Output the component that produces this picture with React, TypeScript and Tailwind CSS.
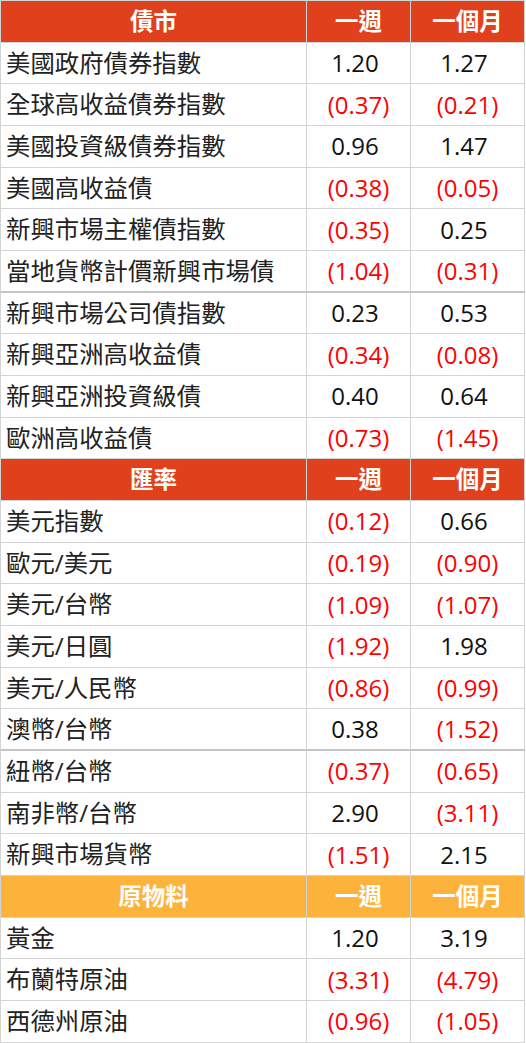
type Row = { name: string; week: string; month: string; thick?: boolean };
type Section = { title: string; color: string; rows: Row[] };

const sections: Section[] = [
  {
    title: '債市',
    color: 'bg-[#e0401c]',
    rows: [
      { name: '美國政府債券指數', week: '1.20', month: '1.27' },
      { name: '全球高收益債券指數', week: '(0.37)', month: '(0.21)' },
      { name: '美國投資級債券指數', week: '0.96', month: '1.47' },
      { name: '美國高收益債', week: '(0.38)', month: '(0.05)' },
      { name: '新興市場主權債指數', week: '(0.35)', month: '0.25' },
      { name: '當地貨幣計價新興市場債', week: '(1.04)', month: '(0.31)', thick: true },
      { name: '新興市場公司債指數', week: '0.23', month: '0.53' },
      { name: '新興亞洲高收益債', week: '(0.34)', month: '(0.08)' },
      { name: '新興亞洲投資級債', week: '0.40', month: '0.64' },
      { name: '歐洲高收益債', week: '(0.73)', month: '(1.45)' },
    ],
  },
  {
    title: '匯率',
    color: 'bg-[#e0401c]',
    rows: [
      { name: '美元指數', week: '(0.12)', month: '0.66' },
      { name: '歐元/美元', week: '(0.19)', month: '(0.90)' },
      { name: '美元/台幣', week: '(1.09)', month: '(1.07)' },
      { name: '美元/日圓', week: '(1.92)', month: '1.98' },
      { name: '美元/人民幣', week: '(0.86)', month: '(0.99)' },
      { name: '澳幣/台幣', week: '0.38', month: '(1.52)', thick: true },
      { name: '紐幣/台幣', week: '(0.37)', month: '(0.65)' },
      { name: '南非幣/台幣', week: '2.90', month: '(3.11)' },
      { name: '新興市場貨幣', week: '(1.51)', month: '2.15' },
    ],
  },
  {
    title: '原物料',
    color: 'bg-[#fdb33b]',
    rows: [
      { name: '黃金', week: '1.20', month: '3.19' },
      { name: '布蘭特原油', week: '(3.31)', month: '(4.79)' },
      { name: '西德州原油', week: '(0.96)', month: '(1.05)' },
    ],
  },
];

function Num({ value }: { value: string }) {
  const neg = value.startsWith('(');
  return (
    <span className={neg ? 'text-[#ff0000]' : 'text-[#111]'}>
      {value}
      {!neg && <span className="invisible">)</span>}
    </span>
  );
}

export default function App() {
  const font = { fontFamily: '"Open Sans", "Noto Sans CJK TC", sans-serif' };
  return (
    <div className="w-[526px] bg-white" style={font}>
      <div className="w-[525px] border-l border-t border-[#d4d4d4]">
        {sections.map((s) => (
          <div key={s.title}>
            {/* section header */}
            <div className={`grid grid-cols-[306px_104px_114px] h-[41.68px] border-b border-[#d4d4d4] ${s.color} text-white text-[23.5px] font-bold`}>
              <div className="flex items-center justify-center border-r border-[#d4d4d4]">{s.title}</div>
              <div className="flex items-center justify-center border-r border-[#d4d4d4]">一週</div>
              <div className="flex items-center justify-center border-r border-[#d4d4d4]">一個月</div>
            </div>
            {s.rows.map((r) => (
              <div
                key={r.name}
                className={`grid grid-cols-[306px_104px_114px] h-[41.68px] text-[24px] ${
                  r.thick ? 'border-b-2 border-[#c4c4c4]' : 'border-b border-[#d4d4d4]'
                }`}
              >
                <div className="flex items-center pl-[5px] text-[#222] border-r border-[#d4d4d4] whitespace-nowrap text-[24.4px]">
                  {r.name}
                </div>
                <div className="flex items-center justify-center border-r border-[#d4d4d4]">
                  <Num value={r.week} />
                </div>
                <div className="flex items-center justify-center border-r border-[#d4d4d4]">
                  <Num value={r.month} />
                </div>
              </div>
            ))}
          </div>
        ))}
      </div>
    </div>
  );
}
